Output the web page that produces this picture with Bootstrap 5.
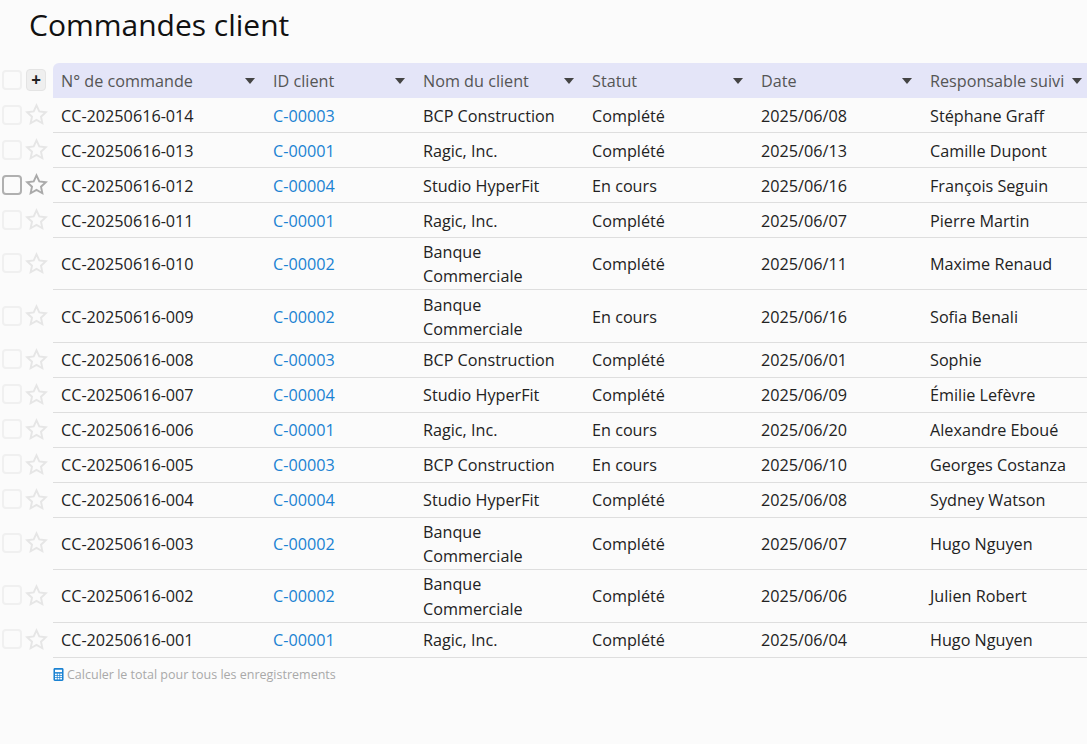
<!DOCTYPE html>
<html lang="fr">
<head>
<meta charset="utf-8">
<title>Commandes client</title>
<link rel="stylesheet" href="https://cdn.jsdelivr.net/npm/bootstrap@5.3.0/dist/css/bootstrap.min.css">
<style>
html,body{height:100%}
body{background:#fbfbfb;font-family:"Open Sans",sans-serif;color:#222;overflow:hidden;width:1087px;height:744px}
.pg-title{font-family:"Open Sans",sans-serif;font-size:30px;font-weight:400;line-height:38px;color:#111;margin:6px 0 0 29px;padding:0}
.grid-wrap{margin-top:19px;width:1087px;overflow:hidden}
.orders{table-layout:fixed;width:1087px;border-collapse:separate;border-spacing:0;font-size:16.2px;line-height:24.3px;margin:0}
.orders th,.orders td{padding:0 8px;vertical-align:middle;font-weight:400;white-space:normal}
.orders .c-box{width:26px;padding:0 0 0 2px}
.orders .c-star{width:27px;padding:0}
.orders tbody tr{height:35px}
.orders tbody td.cell{border-bottom:1px solid #dedede;color:#222;padding-top:2.2px;padding-bottom:.6px}
.orders thead th.head{background:#e4e5f8;color:#555;height:35px;padding:2px 5px 0 8px}
.orders thead th.head-first{border-top-left-radius:6px}
.head-in{display:flex;align-items:center;justify-content:space-between;white-space:nowrap}
.caret-dn{width:0;height:0;border-left:5.5px solid transparent;border-right:5.5px solid transparent;border-top:6px solid #444;flex:none;margin-right:5px}
.head-last .caret-dn{margin-right:0}
.tick{display:block;width:20px;height:20px;border:2px solid #f0f0f0;border-radius:4px;background:#fbfbfb;margin-bottom:2px}
.tick-on{border-color:#b0b0b0}
.star{display:block;width:23px;height:23px;margin:0 0 2px -1px}
.star path{fill:none;stroke:#e6e6e6;stroke-width:2;stroke-linejoin:miter}
.star-on path{stroke:#aaa}
.plus{display:flex;align-items:center;justify-content:center;width:20px;height:22px;background:#efefef;border:1px solid #e4e4e4;border-radius:4px;color:#222;font-size:17px;font-weight:700;line-height:1;margin-bottom:2px}
.cli{color:#1a82d2;text-decoration:none}
.calc{margin:8px 0 0 53px;font-size:12.5px;line-height:18px;color:#a9a9a9}
.calc svg{width:11px;height:13px;vertical-align:-2px;margin-right:3px}
.w1{width:212px}.w2{width:150px}.w3{width:169px}.w4{width:169px}.w5{width:169px}
</style>
</head>
<body>
<h1 class="pg-title">Commandes client</h1>
<div class="grid-wrap">
<table class="orders">
<thead><tr>
<th class="c-box"><span class="tick"></span></th>
<th class="c-star"><span class="plus">+</span></th>
<th class="head head-first w1"><div class="head-in">N° de commande<i class="caret-dn"></i></div></th>
<th class="head w2"><div class="head-in">ID client<i class="caret-dn"></i></div></th>
<th class="head w3"><div class="head-in">Nom du client<i class="caret-dn"></i></div></th>
<th class="head w4"><div class="head-in">Statut<i class="caret-dn"></i></div></th>
<th class="head w5"><div class="head-in">Date<i class="caret-dn"></i></div></th>
<th class="head head-last"><div class="head-in">Responsable suivi<i class="caret-dn"></i></div></th>
</tr></thead>
<tbody id="rows">
<tr><td class="c-box"><span class="tick"></span></td><td class="c-star"><svg class="star" viewBox="0 0 24 24"><path d="M12 2.5l2.9 6.3 6.9.8-5.1 4.7 1.4 6.8-6.1-3.4-6.1 3.4 1.4-6.8-5.1-4.7 6.9-.8z"/></svg></td><td class="cell">CC-20250616-014</td><td class="cell"><a class="cli" href="#">C-00003</a></td><td class="cell">BCP Construction</td><td class="cell">Complété</td><td class="cell">2025/06/08</td><td class="cell">Stéphane Graff</td></tr>
<tr><td class="c-box"><span class="tick"></span></td><td class="c-star"><svg class="star" viewBox="0 0 24 24"><path d="M12 2.5l2.9 6.3 6.9.8-5.1 4.7 1.4 6.8-6.1-3.4-6.1 3.4 1.4-6.8-5.1-4.7 6.9-.8z"/></svg></td><td class="cell">CC-20250616-013</td><td class="cell"><a class="cli" href="#">C-00001</a></td><td class="cell">Ragic, Inc.</td><td class="cell">Complété</td><td class="cell">2025/06/13</td><td class="cell">Camille Dupont</td></tr>
<tr><td class="c-box"><span class="tick tick-on"></span></td><td class="c-star"><svg class="star star-on" viewBox="0 0 24 24"><path d="M12 2.5l2.9 6.3 6.9.8-5.1 4.7 1.4 6.8-6.1-3.4-6.1 3.4 1.4-6.8-5.1-4.7 6.9-.8z"/></svg></td><td class="cell">CC-20250616-012</td><td class="cell"><a class="cli" href="#">C-00004</a></td><td class="cell">Studio HyperFit</td><td class="cell">En cours</td><td class="cell">2025/06/16</td><td class="cell">François Seguin</td></tr>
<tr><td class="c-box"><span class="tick"></span></td><td class="c-star"><svg class="star" viewBox="0 0 24 24"><path d="M12 2.5l2.9 6.3 6.9.8-5.1 4.7 1.4 6.8-6.1-3.4-6.1 3.4 1.4-6.8-5.1-4.7 6.9-.8z"/></svg></td><td class="cell">CC-20250616-011</td><td class="cell"><a class="cli" href="#">C-00001</a></td><td class="cell">Ragic, Inc.</td><td class="cell">Complété</td><td class="cell">2025/06/07</td><td class="cell">Pierre Martin</td></tr>
<tr><td class="c-box"><span class="tick"></span></td><td class="c-star"><svg class="star" viewBox="0 0 24 24"><path d="M12 2.5l2.9 6.3 6.9.8-5.1 4.7 1.4 6.8-6.1-3.4-6.1 3.4 1.4-6.8-5.1-4.7 6.9-.8z"/></svg></td><td class="cell">CC-20250616-010</td><td class="cell"><a class="cli" href="#">C-00002</a></td><td class="cell">Banque Commerciale</td><td class="cell">Complété</td><td class="cell">2025/06/11</td><td class="cell">Maxime Renaud</td></tr>
<tr><td class="c-box"><span class="tick"></span></td><td class="c-star"><svg class="star" viewBox="0 0 24 24"><path d="M12 2.5l2.9 6.3 6.9.8-5.1 4.7 1.4 6.8-6.1-3.4-6.1 3.4 1.4-6.8-5.1-4.7 6.9-.8z"/></svg></td><td class="cell">CC-20250616-009</td><td class="cell"><a class="cli" href="#">C-00002</a></td><td class="cell">Banque Commerciale</td><td class="cell">En cours</td><td class="cell">2025/06/16</td><td class="cell">Sofia Benali</td></tr>
<tr><td class="c-box"><span class="tick"></span></td><td class="c-star"><svg class="star" viewBox="0 0 24 24"><path d="M12 2.5l2.9 6.3 6.9.8-5.1 4.7 1.4 6.8-6.1-3.4-6.1 3.4 1.4-6.8-5.1-4.7 6.9-.8z"/></svg></td><td class="cell">CC-20250616-008</td><td class="cell"><a class="cli" href="#">C-00003</a></td><td class="cell">BCP Construction</td><td class="cell">Complété</td><td class="cell">2025/06/01</td><td class="cell">Sophie</td></tr>
<tr><td class="c-box"><span class="tick"></span></td><td class="c-star"><svg class="star" viewBox="0 0 24 24"><path d="M12 2.5l2.9 6.3 6.9.8-5.1 4.7 1.4 6.8-6.1-3.4-6.1 3.4 1.4-6.8-5.1-4.7 6.9-.8z"/></svg></td><td class="cell">CC-20250616-007</td><td class="cell"><a class="cli" href="#">C-00004</a></td><td class="cell">Studio HyperFit</td><td class="cell">Complété</td><td class="cell">2025/06/09</td><td class="cell">Émilie Lefèvre</td></tr>
<tr><td class="c-box"><span class="tick"></span></td><td class="c-star"><svg class="star" viewBox="0 0 24 24"><path d="M12 2.5l2.9 6.3 6.9.8-5.1 4.7 1.4 6.8-6.1-3.4-6.1 3.4 1.4-6.8-5.1-4.7 6.9-.8z"/></svg></td><td class="cell">CC-20250616-006</td><td class="cell"><a class="cli" href="#">C-00001</a></td><td class="cell">Ragic, Inc.</td><td class="cell">En cours</td><td class="cell">2025/06/20</td><td class="cell">Alexandre Eboué</td></tr>
<tr><td class="c-box"><span class="tick"></span></td><td class="c-star"><svg class="star" viewBox="0 0 24 24"><path d="M12 2.5l2.9 6.3 6.9.8-5.1 4.7 1.4 6.8-6.1-3.4-6.1 3.4 1.4-6.8-5.1-4.7 6.9-.8z"/></svg></td><td class="cell">CC-20250616-005</td><td class="cell"><a class="cli" href="#">C-00003</a></td><td class="cell">BCP Construction</td><td class="cell">En cours</td><td class="cell">2025/06/10</td><td class="cell">Georges Costanza</td></tr>
<tr><td class="c-box"><span class="tick"></span></td><td class="c-star"><svg class="star" viewBox="0 0 24 24"><path d="M12 2.5l2.9 6.3 6.9.8-5.1 4.7 1.4 6.8-6.1-3.4-6.1 3.4 1.4-6.8-5.1-4.7 6.9-.8z"/></svg></td><td class="cell">CC-20250616-004</td><td class="cell"><a class="cli" href="#">C-00004</a></td><td class="cell">Studio HyperFit</td><td class="cell">Complété</td><td class="cell">2025/06/08</td><td class="cell">Sydney Watson</td></tr>
<tr><td class="c-box"><span class="tick"></span></td><td class="c-star"><svg class="star" viewBox="0 0 24 24"><path d="M12 2.5l2.9 6.3 6.9.8-5.1 4.7 1.4 6.8-6.1-3.4-6.1 3.4 1.4-6.8-5.1-4.7 6.9-.8z"/></svg></td><td class="cell">CC-20250616-003</td><td class="cell"><a class="cli" href="#">C-00002</a></td><td class="cell">Banque Commerciale</td><td class="cell">Complété</td><td class="cell">2025/06/07</td><td class="cell">Hugo Nguyen</td></tr>
<tr><td class="c-box"><span class="tick"></span></td><td class="c-star"><svg class="star" viewBox="0 0 24 24"><path d="M12 2.5l2.9 6.3 6.9.8-5.1 4.7 1.4 6.8-6.1-3.4-6.1 3.4 1.4-6.8-5.1-4.7 6.9-.8z"/></svg></td><td class="cell">CC-20250616-002</td><td class="cell"><a class="cli" href="#">C-00002</a></td><td class="cell">Banque Commerciale</td><td class="cell">Complété</td><td class="cell">2025/06/06</td><td class="cell">Julien Robert</td></tr>
<tr><td class="c-box"><span class="tick"></span></td><td class="c-star"><svg class="star" viewBox="0 0 24 24"><path d="M12 2.5l2.9 6.3 6.9.8-5.1 4.7 1.4 6.8-6.1-3.4-6.1 3.4 1.4-6.8-5.1-4.7 6.9-.8z"/></svg></td><td class="cell">CC-20250616-001</td><td class="cell"><a class="cli" href="#">C-00001</a></td><td class="cell">Ragic, Inc.</td><td class="cell">Complété</td><td class="cell">2025/06/04</td><td class="cell">Hugo Nguyen</td></tr>
</tbody>
</table>
</div>
<p class="calc"><svg viewBox="0 0 12 14"><rect x="0.5" y="0" width="11" height="14" rx="1.5" fill="#1a82d2"/><rect x="2.2" y="1.8" width="7.6" height="2.6" fill="#fff"/><g fill="#fff"><rect x="2.2" y="6" width="2" height="1.6"/><rect x="5" y="6" width="2" height="1.6"/><rect x="7.8" y="6" width="2" height="1.6"/><rect x="2.2" y="8.4" width="2" height="1.6"/><rect x="5" y="8.4" width="2" height="1.6"/><rect x="7.8" y="8.4" width="2" height="1.6"/><rect x="2.2" y="10.8" width="2" height="1.6"/><rect x="5" y="10.8" width="2" height="1.6"/><rect x="7.8" y="10.8" width="2" height="1.6"/></g></svg>Calculer le total pour tous les enregistrements</p>
<script src="https://cdn.jsdelivr.net/npm/bootstrap@5.3.0/dist/js/bootstrap.bundle.min.js"></script>
</body>
</html>
